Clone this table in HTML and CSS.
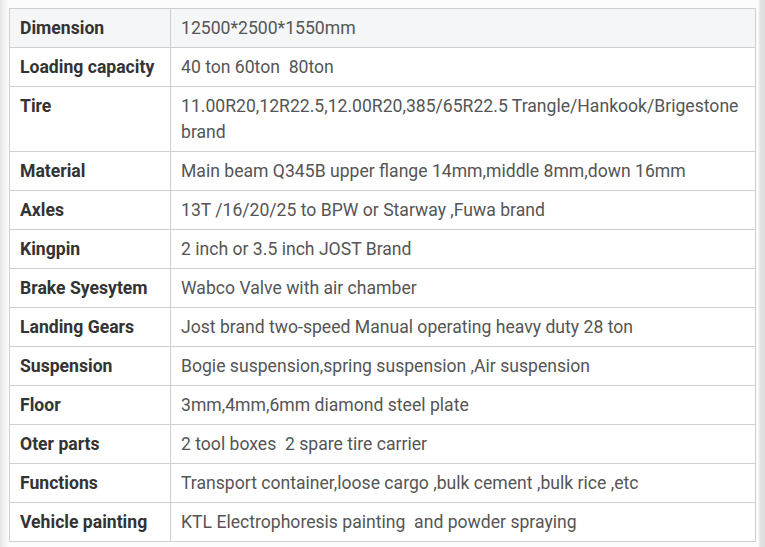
FILE: index.html
```html
<!DOCTYPE html>
<html>
<head>
<meta charset="utf-8">
<link rel="stylesheet" href="styles.css">
</head>
<body>
<div class="frame">
<table class="spec">
<tr class="first"><td class="k">Dimension</td><td class="v">12500*2500*1550mm</td></tr>
<tr><td class="k">Loading capacity</td><td class="v">40 ton 60ton&nbsp; 80ton</td></tr>
<tr><td class="k">Tire</td><td class="v">11.00R20,12R22.5,12.00R20,385/65R22.5 Trangle/Hankook/Brigestone brand</td></tr>
<tr><td class="k">Material</td><td class="v">Main beam Q345B upper flange 14mm,middle 8mm,down 16mm</td></tr>
<tr><td class="k">Axles</td><td class="v">13T /16/20/25 to BPW or Starway ,Fuwa brand</td></tr>
<tr><td class="k">Kingpin</td><td class="v">2 inch or 3.5 inch JOST Brand</td></tr>
<tr><td class="k">Brake Syesytem</td><td class="v">Wabco Valve with air chamber</td></tr>
<tr><td class="k">Landing Gears</td><td class="v">Jost brand two-speed Manual operating heavy duty 28 ton</td></tr>
<tr><td class="k">Suspension</td><td class="v">Bogie suspension,spring suspension ,Air suspension</td></tr>
<tr><td class="k">Floor</td><td class="v">3mm,4mm,6mm diamond steel plate</td></tr>
<tr><td class="k">Oter parts</td><td class="v">2 tool boxes&nbsp; 2 spare tire carrier</td></tr>
<tr><td class="k">Functions</td><td class="v">Transport container,loose cargo ,bulk cement ,bulk rice ,etc</td></tr>
<tr><td class="k">Vehicle painting</td><td class="v">KTL Electrophoresis painting&nbsp; and powder spraying</td></tr>
</table>
</div>
</body>
</html>
```
FILE: styles.css
```css
html, body {
  margin: 0;
  padding: 0;
}
body {
  width: 765px;
  height: 547px;
  overflow: hidden;
  background: #f4f4f5;
  font-family: Roboto, "Liberation Sans", sans-serif;
}
.frame {
  padding: 8px 10px 5px 9px;
  background:
    linear-gradient(to right, #e6e6e8 0, #f4f4f5 5px, #fcfcfc 9px, rgba(255,255,255,0) 9px),
    linear-gradient(to left, #dcdcdc 0, #e4e4e4 5px, #fcfcfc 7px, #fcfcfc 100%);
}
.spec {
  border-collapse: collapse;
  width: 747px;
  background: #fff;
  font-size: 17.6px;
  line-height: 26px;
}
.spec td {
  border: 1px solid #cfcfcf;
  padding: 6px 10px;
  vertical-align: top;
  text-align: left;
}
.spec .k {
  width: 140px;
  font-weight: 700;
  color: #333;
}
.spec .v {
  color: #555;
}
.spec .first td {
  background: #f5f6f7;
}
```
